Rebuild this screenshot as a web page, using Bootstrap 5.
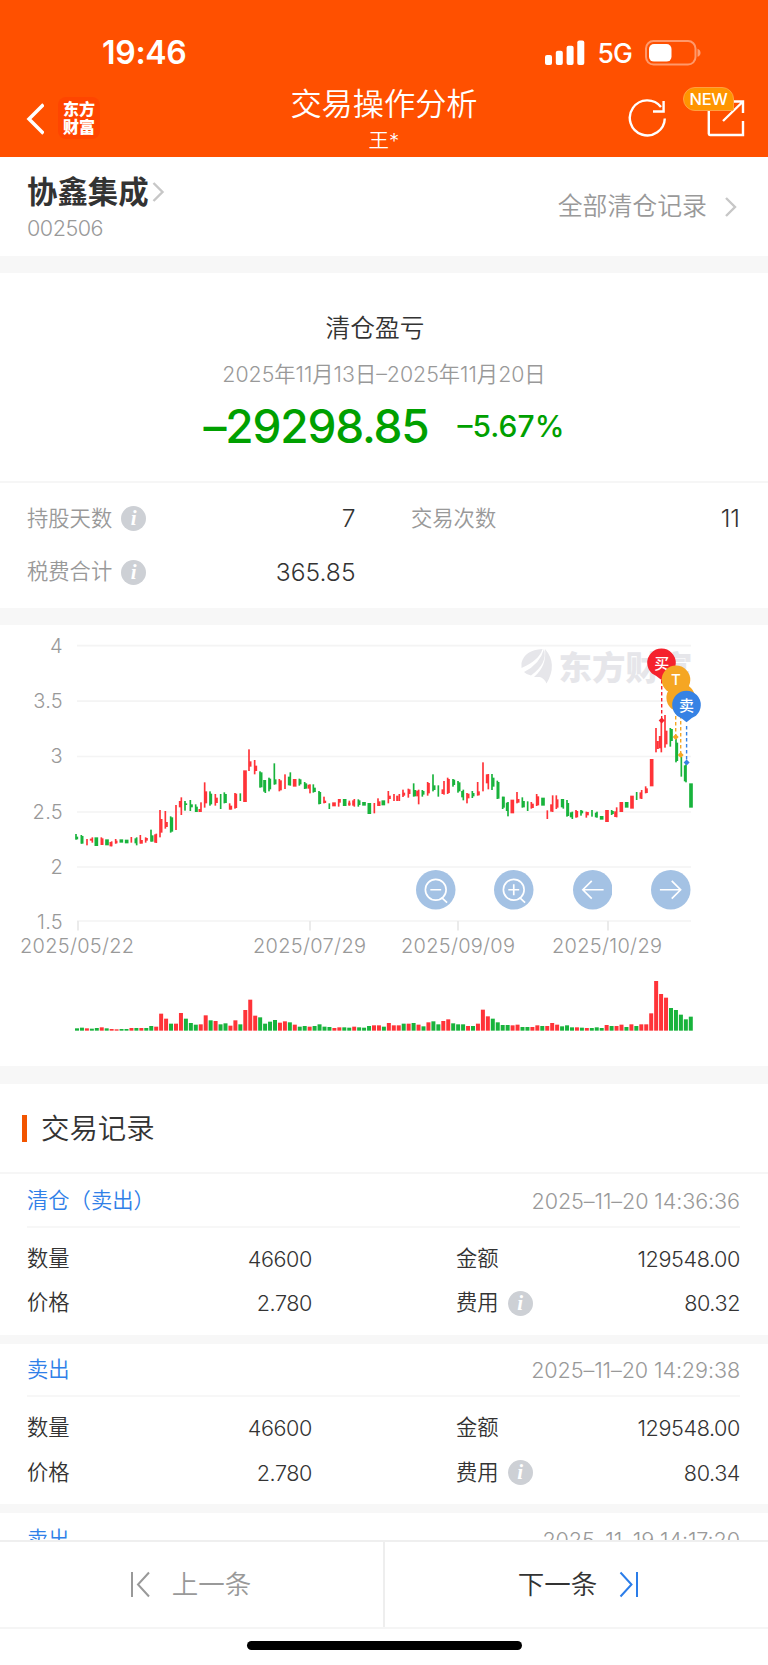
<!DOCTYPE html>
<html lang="zh-CN">
<head>
<meta charset="utf-8">
<meta name="viewport" content="width=device-width, initial-scale=1">
<title>交易操作分析</title>
<link href="https://cdn.jsdelivr.net/npm/bootstrap@5.3.0/dist/css/bootstrap.min.css" rel="stylesheet">
<style>
body{font-family:Inter,"Noto Sans CJK SC",sans-serif;font-size:21.3px;font-weight:350;line-height:1.5;color:#333;background:#fff}
svg{display:block;flex:none}
.screen{height:1665px}
.topbar{height:157px;background:#ff5000}
.status{height:84px;padding:23px 66px 0 102px}
.clock{font-size:32px;font-weight:600;line-height:60px;letter-spacing:-.3px}
.net{font-size:26.5px;font-weight:500;line-height:60px;margin-left:13px;margin-right:13px;letter-spacing:-.9px}
.navrow{display:grid;grid-template-columns:1fr auto 1fr;height:73px}
.applogo{width:42px;height:42px;border-radius:8px;background:#ff4500;font-size:16px;font-weight:900;line-height:18px;padding:3px 0 0 5px;margin-left:14px;margin-top:-1px}
.title{font-size:31.2px;line-height:40px}
.owner{font-size:20.5px;line-height:30px;padding-top:2px}
.tools{padding:13px 23px 0 0}
.newtag{left:-22px;top:-10px;width:51px;height:24px;border-radius:12px 12px 2px 12px;background:#ff9500;border:1px solid #ffa040;font-size:16.5px;font-weight:500;line-height:22px;letter-spacing:-.4px}
.band{height:17px;background:#f7f7f7}
.stock{height:99px;padding:0 30px 0 27px}
.sname{font-size:30.4px;font-weight:700;line-height:42px}
.scode{font-size:21.6px;line-height:30px;color:#999;letter-spacing:-.5px}
.allrec{font-size:24.9px;color:#999}
.summary{height:210px;padding-top:34px;border-bottom:2px solid #f6f6f6}
.s-title{font-size:24.7px;line-height:40px;padding-right:18px;padding-top:1px}
.s-date{line-height:32px;margin-top:10px;color:#999}
.loss{color:#00a000;font-weight:500;line-height:60px;margin-top:6px}
.loss-amt{font-size:46px;letter-spacing:-1.2px}
.loss-pct{font-size:30px;margin-left:29px}
.facts{height:125px;padding:9px 28px 0 27px}
.facts .line{height:53.5px}
.fact-a{width:328.5px}.fact-b{flex:1;margin-left:55.5px}
.muted{color:#999}
.num{font-size:24.6px}
.info{width:25px;height:25px;border-radius:50%;background:#cdd0d5;color:#fff;font:italic 700 21px/24px "Liberation Serif",serif;text-align:center;margin-left:9px}
.chart{height:441px}
.ctl{left:416px;top:245px;gap:38.9px}
.sect{height:90px;border-bottom:2px solid #f6f6f6;padding-left:22px}
.sect i{width:5px;height:27px;background:#f25500;margin-right:14px}
.sect span{font-size:28.4px;padding-top:2px}
.rec{height:160.5px;padding:0 28px 0 27px}
.rec-h{height:53.5px;padding-top:2px;border-bottom:2px solid #f7f7f7}
.rec-h .type{color:#3080e8}
.rec-rows{padding-top:9px}
.rec .line{height:44.6px}
.rec-a{width:285px}.rec-b{flex:1;margin-left:144px}
.rec .num{font-size:21.6px;letter-spacing:-.4px}
.rec-h .muted{font-size:21.6px;letter-spacing:-.1px}
.rec-gap{height:9px;background:#f7f7f7}
.pager{height:89px;border-top:2px solid #efefef;border-bottom:2px solid #f5f5f5;font-size:26.5px}
.pager>div{flex:1}
.pager>div:first-child{flex:0 0 385px;border-right:2px solid #eee;color:#999;padding-right:2px}
.home{height:36px;padding-top:12px}
.home i{width:275px;height:9px;border-radius:5px;background:#000;display:block;margin:auto}
</style>
</head>
<body>
<div class="screen d-flex flex-column overflow-hidden">
<header class="topbar text-white flex-shrink-0">
  <div class="status d-flex justify-content-between align-items-start">
    <span class="clock">19:46</span>
    <div class="d-flex align-items-center">
      <svg width="40" height="26" fill="#fff"><rect x="0" y="15" width="7" height="10" rx="2"/><rect x="10.8" y="10.700" width="7" height="14.300" rx="2"/><rect x="21.600" y="5.700" width="7" height="19.300" rx="2"/><rect x="32.300" y=".5" width="7" height="24.500" rx="2"/></svg>
      <span class="net">5G</span>
      <svg width="57" height="26"><rect x="1" y="1" width="49.500" height="23.600" rx="7.500" fill="none" stroke="#fff" stroke-opacity=".42" stroke-width="2"/><rect x="4" y="4" width="22.500" height="17.600" rx="5" fill="#fff"/><path d="M52.500 8.800q3 1 3 4t-3 4z" fill="#fff" opacity=".45"/></svg>
    </div>
  </div>
  <div class="navrow">
    <div class="d-flex align-items-start" style="padding:14px 0 0 26px">
      <svg width="18" height="42" fill="none" stroke="#fff" stroke-width="3.500"><path d="M17.500 6.500 3 21l14.500 14.500"/></svg>
      <div class="applogo">东方<br>财富</div>
    </div>
    <div class="text-center"><div class="title">交易操作分析</div><div class="owner">王*</div></div>
    <div class="tools d-flex justify-content-end">
      <svg width="40" height="42" fill="none" stroke="#fff" stroke-width="2.400"><path d="M36.800 21.500A17.500 17.500 0 1 1 33 10M35.600 4v10.500H25"/></svg>
      <div class="position-relative" style="margin-left:37px"><svg width="40" height="42" fill="none" stroke="#fff" stroke-width="2.400"><path d="M21 4.500H3.800v32.300q0 1.200 1.200 1.200h33V24M28 4.500h10V16M38 4.500 18 24"/></svg><span class="newtag position-absolute text-center">NEW</span></div>
    </div>
  </div>
</header>
<main class="flex-fill overflow-hidden" style="min-height:0">
  <section class="stock d-flex justify-content-between">
    <div style="padding-top:14px"><div class="d-flex align-items-center sname">协鑫集成<svg width="14" height="22" style="margin-left:3px" fill="none" stroke="#c7c7c7" stroke-width="2.400"><path d="m1.500 2 9 9-9 9"/></svg></div><div class="scode">002506</div></div>
    <div class="d-flex align-items-center allrec">全部清仓记录<svg width="14" height="22" style="margin-left:17px" fill="none" stroke="#c7c7c7" stroke-width="2.400"><path d="m2 2 9 9-9 9"/></svg></div>
  </section>
  <div class="band"></div>
  <section class="summary text-center">
    <div class="s-title">清仓盈亏</div>
    <div class="s-date">2025年11月13日–2025年11月20日</div>
    <div class="loss d-flex justify-content-center align-items-center"><span class="loss-amt">–29298.85</span><span class="loss-pct">–5.67%</span></div>
  </section>
  <section class="facts">
    <div class="line d-flex align-items-center"><div class="fact-a d-flex align-items-center"><span class="muted">持股天数</span><span class="info">i</span><span class="num ms-auto">7</span></div><div class="fact-b d-flex align-items-center"><span class="muted">交易次数</span><span class="num ms-auto">11</span></div></div>
    <div class="line d-flex align-items-center"><div class="fact-a d-flex align-items-center"><span class="muted">税费合计</span><span class="info">i</span><span class="num ms-auto">365.85</span></div></div>
  </section>
  <div class="band"></div>
  <section class="chart position-relative">
    <svg id="plot" width="768" height="441" viewBox="0 625 768 441" font-size="20">
      <g stroke="#f4f4f4" stroke-width="1.700"><path d="M77 645.700H691M77 701.200H691M77 756.500H691M77 812H691M77 867H691M77 921H691"/><path stroke="#e8e8e8" d="M78 921v9.500M310 921v9.500M458 921v9.500M608 921v9.500"/></g>
      <g fill="#999" text-anchor="end" letter-spacing=".3"><text x="63" y="652.500">4</text><text x="63" y="708">3.5</text><text x="63" y="763">3</text><text x="63" y="818.500">2.5</text><text x="63" y="873.500">2</text><text x="63" y="928.500">1.5</text></g>
      <g fill="#999"><text x="20" y="952.700" textLength="114">2025/05/22</text><text x="253" y="952.700" textLength="113">2025/07/29</text><text x="401" y="952.700" textLength="114">2025/09/09</text><text x="552" y="952.700" textLength="110">2025/10/29</text></g>
      <g fill="#e6e6ea"><path d="M521.500 663q3-13 21-14-3 11-21 19zM524 672q16-8 20-23 4 14-13 26.500-4-.5-7-3.500zM534 677q13-11 11-28 13 15 1.500 34.500-2-5-6.500-6.500z"/><text x="558.500" y="679.500" font-size="33.500" font-weight="900" font-family="Noto Sans CJK SC">东方财富</text></g>
      <g id="bars" transform="translate(0 620) scale(.33333)"></g>
      <g fill="none" stroke-width="1.400" stroke-dasharray="3.500 2.500"><path stroke="#f5222d" d="M661.700 680v40"/><path stroke="#f5a623" d="M675.700 710v27M680.700 715v40"/><path stroke="#3682e4" d="M686.600 726v36"/></g>
      <path fill="#f5222d" d="m661.700 717.500 3 3-3 3-3-3z"/><path fill="#f5a623" d="m675.700 734 3 3-3 3-3-3zM680.700 752l3 3-3 3-3-3z"/><path fill="#3682e4" d="m686.600 759.500 3 3-3 3-3-3z"/>
      <g fill="#fff" font-size="15" font-weight="500" text-anchor="middle">
        <path fill="#f5222d" d="M652 673.500a14.300 14.300 0 1 1 19 0q-5 2-9.500 6.500-4.500-4-9.500-6.500z"/><text x="661.700" y="669">买</text>
        <path fill="#f5a623" d="M671.200 708.500a14.300 14.300 0 1 1 19 0q-5 2-9.500 6.500-4.500-4-9.500-6.500z"/><text x="681" y="703">T</text>
        <path fill="#f5a623" d="M666.500 690.500a14.300 14.300 0 1 1 19 0q-5 2-9.500 6.500-4.500-4-9.500-6.500z"/><text x="676" y="685">T</text>
        <path fill="#3682e4" d="M677 715.700a14.300 14.300 0 1 1 19 0q-5 2-9.500 6.500-4.500-4-9.500-6.500z"/><text x="686.600" y="711">卖</text>
      </g>
    </svg>
    <div class="ctl position-absolute d-flex">
      <svg width="39.500" height="39.500" viewBox="0 0 40 40" fill="none" stroke="#fff" stroke-width="1.700"><circle cx="20" cy="20" r="20" fill="#a4c2e4" stroke="none"/><circle cx="20" cy="20" r="10.500"/><path d="M14.500 20h11M26 28l5.500 5"/></svg>
      <svg width="39.500" height="39.500" viewBox="0 0 40 40" fill="none" stroke="#fff" stroke-width="1.700"><circle cx="20" cy="20" r="20" fill="#a4c2e4" stroke="none"/><circle cx="20" cy="20" r="10.500"/><path d="M14.500 20h11M20 14.500v11M26 28l5.500 5"/></svg>
      <svg width="39.500" height="39.500" viewBox="0 0 40 40" fill="none" stroke="#fff" stroke-width="1.700"><circle cx="20" cy="20" r="20" fill="#a4c2e4" stroke="none"/><path d="M31 20H9.500M19 11l-9 9 9 9"/></svg>
      <svg width="39.500" height="39.500" viewBox="0 0 40 40" fill="none" stroke="#fff" stroke-width="1.700"><circle cx="20" cy="20" r="20" fill="#a4c2e4" stroke="none"/><path d="M9 20h21.500M21 11l9 9-9 9"/></svg>
    </div>
  </section>
  <div class="band" style="height:18px"></div>
  <section class="sect d-flex align-items-center"><i></i><span>交易记录</span></section>
  <section class="rec">
    <div class="rec-h d-flex align-items-center justify-content-between"><span class="type">清仓（卖出）</span><span class="muted">2025–11–20 14:36:36</span></div>
    <div class="rec-rows">
    <div class="line d-flex align-items-center"><div class="rec-a d-flex justify-content-between align-items-center"><span>数量</span><span class="num">46600</span></div><div class="rec-b d-flex align-items-center"><span>金额</span><span class="num ms-auto">129548.00</span></div></div>
    <div class="line d-flex align-items-center"><div class="rec-a d-flex justify-content-between align-items-center"><span>价格</span><span class="num">2.780</span></div><div class="rec-b d-flex align-items-center"><span>费用</span><span class="info">i</span><span class="num ms-auto">80.32</span></div></div>
    </div>
  </section>
  <div class="rec-gap"></div>
  <section class="rec">
    <div class="rec-h d-flex align-items-center justify-content-between"><span class="type">卖出</span><span class="muted">2025–11–20 14:29:38</span></div>
    <div class="rec-rows">
    <div class="line d-flex align-items-center"><div class="rec-a d-flex justify-content-between align-items-center"><span>数量</span><span class="num">46600</span></div><div class="rec-b d-flex align-items-center"><span>金额</span><span class="num ms-auto">129548.00</span></div></div>
    <div class="line d-flex align-items-center"><div class="rec-a d-flex justify-content-between align-items-center"><span>价格</span><span class="num">2.780</span></div><div class="rec-b d-flex align-items-center"><span>费用</span><span class="info">i</span><span class="num ms-auto">80.34</span></div></div>
    </div>
  </section>
  <div class="rec-gap"></div>
  <section class="rec"><div class="rec-h d-flex align-items-center justify-content-between"><span class="type">卖出</span><span class="muted">2025–11–19 14:17:20</span></div></section>
</main>
<footer class="flex-shrink-0 bg-white">
  <div class="pager d-flex">
    <div class="d-flex align-items-center justify-content-center"><svg width="20" height="27" style="margin-right:22px" fill="none" stroke="#999" stroke-width="2"><path d="M2 1v25M19 1.500 8 13.500l11 12"/></svg>上一条</div>
    <div class="d-flex align-items-center justify-content-center ps-1">下一条<svg width="20" height="27" style="margin-left:22px" fill="none" stroke="#2b7de9" stroke-width="2"><path d="M18 1v25M1.500 1.500l11 12-11 12"/></svg></div>
  </div>
  <div class="home"><i></i></div>
</footer>
</div>
<script src="https://cdn.jsdelivr.net/npm/bootstrap@5.3.0/dist/js/bootstrap.bundle.min.js"></script>
<script>
// Daily volume: colour followed by bar height.
const volumes = `g7 g9 r7 g6 g8 r10 g7 r5 r4 g5 g5 r8 g8 r8 g8 g14 r12 r51 r36 g21 r21 r53 g36 g23 g18 r19 r46 g31 r29 g19 g22 r15 r31 g19 r62 r93 r45 g40 g21 g27 g32 r24 r28 g25 r18 g12 g14 r12 g14 g19 g12 g11 r8 r10 g10 g9 r12 g10 g9 g14 r16 r16 g12 r23 r16 r16 g21 r21 g23 r18 g13 r25 g28 g19 r29 r34 g22 g19 g19 r14 g14 r21 r63 r43 g36 g25 g17 g17 r16 r18 g11 g11 r11 r16 g14 r14 r23 r18 g13 g16 g10 r10 g9 r8 g8 g10 g8 r17 g14 r14 r18 g11 r19 g14 r19 r19 r52 r149 r110 r99 g68 g62 g48 g34 g42`.split(' ');
// Daily candle: colour, wick x, high, low [, body x, top, bottom]; "-" body means wick only.
const candles = `g 228 642 659 231 650 658|g 244 645 671 247 648 671|r 261 657 676 -|r 277 652 668 273 656 662|g 289 652 678|r 304 652 675 307 655 675|g 321 658 676|r 335 664 679 332 666 679|r 347 657 671 349 662 670|g 364 658 668|g 380 659 670|r 394 651 668 -|g 410 652 676 407 655 670|r 421 645 671 425 660 671|r 437 652 668 440 654 662|g 453 629 665 457 646 665|r 469 641 669 466 643 668|r 480 570 652 484 597 638|r 496 573 626 500 606 621|g 512 589 638 516 592 635|r 528 555 630 -|r 544 532 585 540 543 562|g 555 543 572 558 550 555|g 571 540 573 575 553 562|g 587 553 576 590 560 576|r 603 547 576 599 567 576|r 614 487 563 618 514 550|g 630 514 557 633 521 553|r 646 522 557 650 533 549|g 662 522 567 -|g 673 517 550 677 522 549|r 689 550 569 693 557 569|r 705 519 566 708 521 564|g 721 520 543 -|r 735 451 546|r 747 388 453 751 424 440|r 764 420 463 768 437 453|g 780 454 503 784 457 502|g 796 480 519 793 480 515|g 807 473 514 810 476 508|g 823 430 494 826 478 493|r 838 477 514 842 481 511|r 855 463 507 -|g 871 457 497 867 470 496|r 884 477 500|g 898 476 497 901 478 493|g 914 486 507 918 490 506|r 930 493 520 926 494 506|g 940 493 518 944 503 516|g 957 513 553 960 516 552|r 972 530 550 975 542 549|g 988 550 567 -|r 1002 547 559|r 1016 537 560 1019 537 548|g 1034 537 558|r 1048 542 557 1048 548 556|r 1063 537 560 1060 541 557|g 1075 538 560 1078 541 555|g 1092 546 557|g 1108 549 582|r 1123 549 580 -|r 1134 535 558 1138 544 558|g 1150 541 556|r 1165 513 550 1169 527 537|r 1182 522 543 -|r 1198 522 543 1192 527 543|r 1209 509 531 1212 518 527|r 1225 506 533 1228 508 522|g 1241 490 530 1245 510 529|r 1256 509 553 1252 512 529|g 1267 510 530 1270 513 524|r 1283 486 527 1286 489 520|g 1299 463 514 1303 496 510|g 1315 496 530 -|r 1332 483 524 1328 508 522|r 1343 473 522 1346 477 519|g 1359 477 500 1362 479 495|g 1374 483 518 1378 487 514|g 1390 509 541 1387 513 532|r 1401 519 550 1405 521 535|g 1417 513 534 1420 519 529|r 1433 486 527 1436 514 526|r 1449 427 514 -|r 1465 462 508 1461 463 490|g 1476 462 510 1480 473 500|g 1492 482 537 1495 486 536|g 1508 530 567 1511 530 563|g 1524 546 589 1521 548 573|r 1537 539 580|r 1551 516 550 1555 537 548|g 1567 532 563 1571 543 562|g 1583 544 573 -|r 1594 546 566 1598 551 564|r 1610 522 558 1614 529 556|g 1629 533 557|r 1642 571 597 -|r 1658 526 576 1654 553 575|r 1669 526 567 1672 538 563|g 1690 537 566 1686 537 562|g 1701 540 590 1704 549 588|g 1717 575 597 1713 577 592|r 1728 570 593 1731 573 592|g 1743 570 587 1746 572 580|r 1759 575 593 1763 576 586|g 1776 570 590 -|g 1791 575 593 1788 578 592|g 1805 588 599|r 1821 570 606|g 1835 570 585 1838 573 582|r 1850 562 592 1846 574 591|r 1864 546 576|g 1880 546 563|r 1896 527 566|g 1910 516 540 -|r 1925 510 537 1922 517 536|r 1937 499 520 1940 505 519|r 1955 417 499|r 1968 324 397 1973 363 387|r 1984 302 397 1980 348 385|r 1995 285 383 1999 332 373|g 2011 324 380 2015 327 363|g 2028 357 427 2031 368 423|g 2044 410 470 -|g 2058 433 487 2055 436 484|g 2073 490 563`.split('|');
const fill = {r:'#ff3338', g:'#18b33c'};
const rect = (x,w,y,h,c) => `<rect x="${x-w/2}" y="${y}" width="${w}" height="${h}" fill="${fill[c]}"/>`;
let out = '';
volumes.forEach((v,i) => { const h = +v.slice(1); out += rect(231+14.85*i, 12, 1232-h, h, v[0]); });
candles.forEach(s => {
  const [c,x,t,b,bx,bt,bb] = s.split(' ');
  if (bx === undefined) out += rect(+x, 11, +t, b-t, c);
  else { out += rect(+x, 5, +t, b-t, c); if (bx !== '-') out += rect(+bx, 7, +bt, bb-bt, c); }
});
document.getElementById('bars').innerHTML = out;
</script>
</body>
</html>
